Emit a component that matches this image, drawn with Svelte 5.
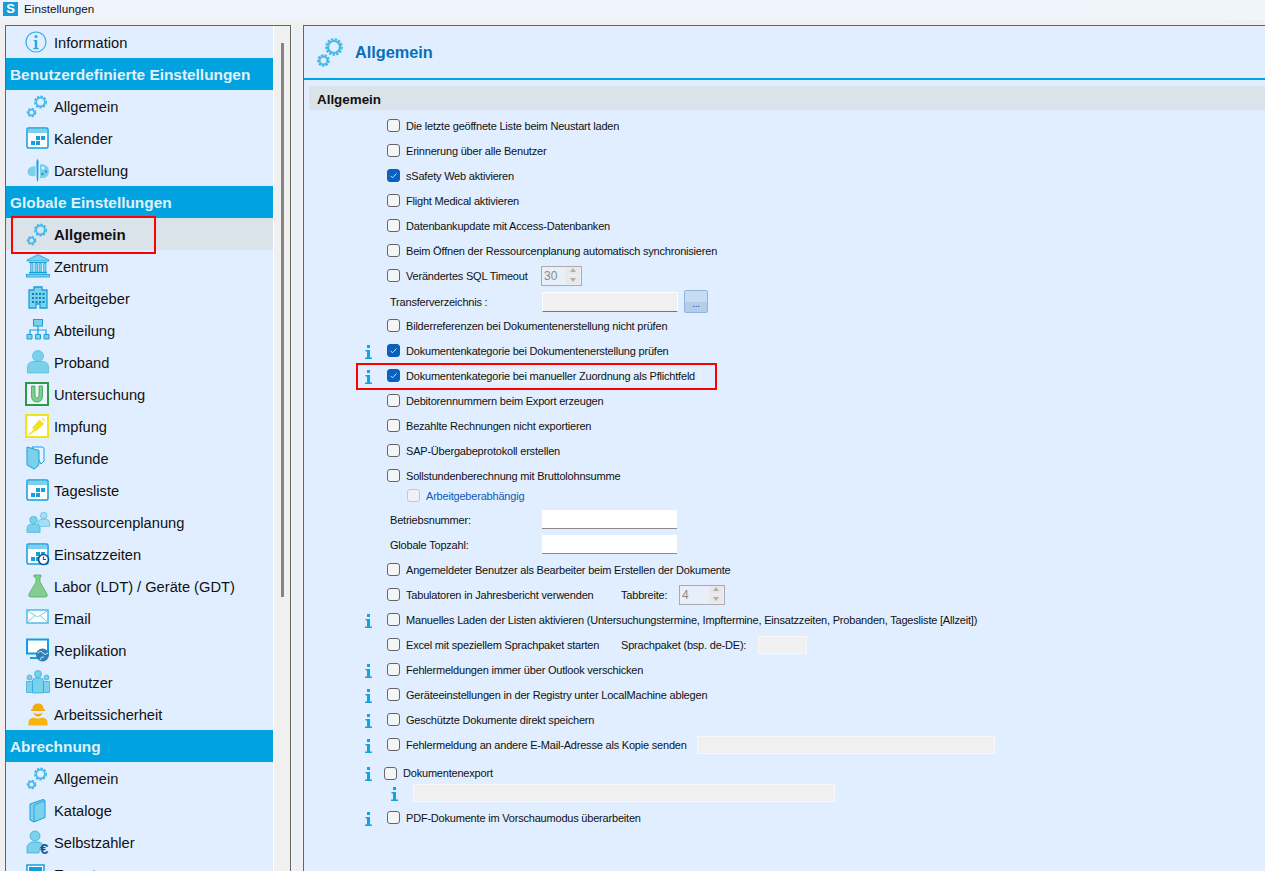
<script>
	const nav = [
		{ label: 'Information', icon: 'info' },
		{ head: 'Benutzerdefinierte Einstellungen' },
		{ label: 'Allgemein', icon: 'gears' },
		{ label: 'Kalender', icon: 'calendar' },
		{ label: 'Darstellung', icon: 'palette' },
		{ head: 'Globale Einstellungen' },
		{ label: 'Allgemein', icon: 'gears', active: true },
		{ label: 'Zentrum', icon: 'temple' },
		{ label: 'Arbeitgeber', icon: 'building' },
		{ label: 'Abteilung', icon: 'org' },
		{ label: 'Proband', icon: 'person' },
		{ label: 'Untersuchung', icon: 'exam' },
		{ label: 'Impfung', icon: 'syringe' },
		{ label: 'Befunde', icon: 'folder' },
		{ label: 'Tagesliste', icon: 'calendar' },
		{ label: 'Ressourcenplanung', icon: 'people' },
		{ label: 'Einsatzzeiten', icon: 'clock' },
		{ label: 'Labor (LDT) / Geräte (GDT)', icon: 'flask' },
		{ label: 'Email', icon: 'mail' },
		{ label: 'Replikation', icon: 'monitor' },
		{ label: 'Benutzer', icon: 'users' },
		{ label: 'Arbeitssicherheit', icon: 'worker' },
		{ head: 'Abrechnung' },
		{ label: 'Allgemein', icon: 'gears' },
		{ label: 'Kataloge', icon: 'book' },
		{ label: 'Selbstzahler', icon: 'payer' },
		{ label: 'Exporte', icon: 'export' }
	];

	const line = '#1a9fdd';
	const soft = '#7bd0ea';
</script>

{#snippet gear(cx, cy, r, w)}
	<circle {cx} {cy} r={r + w * 0.8} fill="none" stroke="#45b8e8" stroke-width={w} stroke-dasharray="2.4 1.300" />
	<circle {cx} {cy} {r} fill="none" stroke="#45b8e8" stroke-width={w} />
{/snippet}

{#snippet bust(x, y, s, fill)}
	<g transform="translate({x} {y}) scale({s})">
		<circle cx="8" cy="5" r="4.6" fill={fill} stroke={line} stroke-width="0.6" />
		<path d="M0 20v-5q0-4.500 5-5h6q5 .5 5 5v5z" fill={fill} stroke={line} stroke-width="0.6" />
	</g>
{/snippet}

{#snippet icon(name)}
	<svg class="ico" viewBox="0 0 24 24" width="24" height="24">
		{#if name === 'info'}
			<circle cx="10" cy="12" r="10" fill="none" stroke="#35b1e4" stroke-width="1.200" />
			<circle cx="10" cy="6.500" r="1.500" fill="#2aa8e0" />
			<path d="M7.800 10h3.400v8h1.500v1.200H7.300V18h1.500v-6.800h-1z" fill="#2aa8e0" />
		{:else if name === 'gears'}
			{@render gear(14.500, 8, 4.300, 1.700)}
			{@render gear(5.500, 18.500, 2.800, 1.500)}
		{:else if name === 'calendar' || name === 'clock'}
			<rect x="1" y="2" width="21" height="20" rx="1.500" fill="#fff" stroke="#109fdf" stroke-width="1.500" />
			<rect x="2" y="3" width="19" height="4" fill={soft} />
			<path d="M10 10h4v4h-4zM15 10h4v4h-4zM5 15h4v4H5zM10 15h4v4h-4z" fill="#109fdf" />
			{#if name === 'clock'}
				<circle cx="17.500" cy="17.500" r="5" fill="#fff" stroke="#0d5a94" stroke-width="1.700" />
				<path d="M17.500 14.500v3h2.500" fill="none" stroke="#0d5a94" stroke-width="1.200" />
			{/if}
		{:else if name === 'palette'}
			<path d="M9.500 8Q1 8.500 1.500 14T9.500 18z" fill={soft} />
			<path d="M14 6q9 0 9 7.500T14 20z" fill={soft} />
			<circle cx="17" cy="10" r="1.300" fill="#fff" />
			<circle cx="20" cy="13.500" r="1.300" fill="#1a9fdd" />
			<circle cx="16.500" cy="16" r="1.300" fill="#1a9fdd" />
			<path d="M11.500 0.500q1.500 2 1 6l-.2 15-.8 2.500-.8-2.500-.2-15q-.5-3 1-6z" fill="#1a9fdd" />
		{:else if name === 'temple'}
			<path d="M12 0.500 23 6v1H1V6z" fill={soft} stroke={line} stroke-width="0.800" />
			<path d="M3 8h18v1H3zM3 18h18v1.500H3z" fill={line} />
			<path d="M4.500 9.500h2.500v8.500H4.500zM9 9.500h2.500v8.500H9zM13 9.500h2.500v8.500H13zM17.500 9.500H20v8.500h-2.500z" fill={soft} stroke={line} stroke-width="0.600" />
			<rect x="0.500" y="20.500" width="23" height="2.500" fill={soft} stroke={line} stroke-width="0.800" />
		{:else if name === 'building'}
			<path d="M3 4h5V1h8v3h5v18h-7v-4h-4v4H3z" fill={soft} stroke={line} stroke-width="1.300" />
			<path d="M6 7h2v2H6zM9.500 7h2v2h-2zM13 7h2v2h-2zM16.500 7h2v2h-2zM6 11h2v2H6zM9.500 11h2v2h-2zM13 11h2v2h-2zM16.500 11h2v2h-2zM6 15h2v2H6zM9.500 15h2v2h-2zM13 15h2v2h-2zM16.500 15h2v2h-2z" fill="#0f7fc0" />
		{:else if name === 'org'}
			<rect x="7.500" y="1.500" width="9" height="6.500" fill={soft} stroke={line} stroke-width="1" />
			<path d="M12 8v4M4 16v-4h16v4M12 12v4" fill="none" stroke={line} stroke-width="1.200" />
			<path d="M1 16.500h5V21H1zM9.500 16.500h5V21h-5zM18 16.500h5V21h-5z" fill={soft} stroke={line} stroke-width="1" />
		{:else if name === 'person'}
			<circle cx="12" cy="6" r="5.500" fill={soft} stroke="#4cb8e3" stroke-width="0.700" />
			<path d="M1.500 23v-6q0-4.500 5-5.500h11q5 1 5 5.500v6z" fill={soft} stroke="#4cb8e3" stroke-width="0.700" />
		{:else if name === 'exam'}
			<rect x="0" y="1" width="22" height="22" fill="#eef5ff" stroke="#2c9a46" stroke-width="2" />
			<path d="M5.500 4h3.500v9q0 3 2 3t2-3V4h3.500v10q0 6-5.500 6T5.500 14z" fill="#7fce8e" stroke="#2c9a46" stroke-width="0.700" />
		{:else if name === 'syringe'}
			<rect x="0" y="1" width="22" height="22" fill="#fff" stroke="#f2e41a" stroke-width="2" />
			<path d="M13.500 6 17.500 10 9.500 17 6.500 14zM2.500 21 7.500 16 8.500 17zM15.500 4l4 4M16.500 6l2-2" fill="#f2e41a" stroke="#e8d810" stroke-width="0.800" />
		{:else if name === 'folder'}
			<path d="M6 1h10q2 0 2 2v12l-3 3z" fill="#e6f3fb" stroke={line} stroke-width="1" />
			<path d="M1 1l12 3.500V17q0 1-1 3l-4 3-7-4z" fill={soft} stroke={line} stroke-width="1" />
		{:else if name === 'people'}
			{@render bust(12, 2, 0.72, '#a5dff1')}
			{@render bust(1, 6, 0.82, soft)}
		{:else if name === 'flask'}
			<path d="M8 1h7v2h-1v5l7 12q1 3-2 3H5q-3 0-2-3l7-12V3H8z" fill="#84cd90" stroke="#4eae60" stroke-width="0.800" />
		{:else if name === 'mail'}
			<rect x="1" y="4" width="21" height="13" fill="#fff" stroke="#35b1e4" stroke-width="1.300" />
			<path d="M1 4.500 11.500 11 22 4.500M1 16.500 9 9.500M22 16.500l-8-7" fill="none" stroke="#6cc7ea" stroke-width="0.900" />
		{:else if name === 'monitor'}
			<rect x="1" y="1.500" width="21" height="14" fill="#fff" stroke="#109fdf" stroke-width="2" />
			<path d="M4 20h13" stroke="#109fdf" stroke-width="2" />
			<circle cx="16.500" cy="17" r="6.500" fill="#2f80b8" />
			<path d="M11.500 15q4-3 5.500 0t5 0M14 22q1-4 4-3" fill="none" stroke="#d7ecf8" stroke-width="1" />
		{:else if name === 'users'}
			<circle cx="3.500" cy="7.500" r="2.500" fill={soft} stroke={line} stroke-width="0.600" />
			<path d="M0.500 11.500h6v11h-6z" fill={soft} stroke={line} stroke-width="0.600" />
			<circle cx="20.500" cy="7.500" r="2.500" fill={soft} stroke={line} stroke-width="0.600" />
			<path d="M17.500 11.500h6v11h-6z" fill={soft} stroke={line} stroke-width="0.600" />
			<circle cx="12" cy="4" r="3.500" fill={soft} stroke={line} stroke-width="0.600" />
			<path d="M6.500 11q0-3 3-3h5q3 0 3 3v12h-11z" fill={soft} stroke={line} stroke-width="0.600" />
		{:else if name === 'worker'}
			<path d="M6.500 7q0-5.500 5.500-5.500T17.500 7l1.500.5v1.500H5v-1.500z" fill="#f3aa10" />
			<path d="M7.500 10q1 4.500 4.500 4.500t4.500-4.500q-1 2-4.500 2t-4.500-2z" fill="#f3aa10" />
			<path d="M2.500 23.500V20q0-3.500 5-4.500 4.500 2 9 0 5 1 5 4.500v3.500z" fill="#f6b40e" />
		{:else if name === 'book'}
			<path d="M4 6 17 1.500l2 1v17L8 24l-4-2z" fill={soft} stroke={line} stroke-width="1" />
			<path d="M8 7V24M8 7 19 2.500" fill="none" stroke={line} stroke-width="0.800" />
		{:else if name === 'payer'}
			<circle cx="9" cy="6" r="5" fill={soft} stroke={line} stroke-width="0.600" />
			<path d="M1 23v-5q0-4.500 5-6h7q4 1 4 4-4 1-4 7z" fill={soft} stroke={line} stroke-width="0.600" />
			<text x="14" y="23.500" class="euro">€</text>
		{:else if name === 'export'}
			<rect x="1" y="3" width="17" height="22" fill="#fff" stroke="#109fdf" stroke-width="1.500" />
			<rect x="3" y="5" width="13" height="4" fill="#109fdf" />
		{/if}
	</svg>
{/snippet}

{#snippet tip()}
	<svg class="tip" viewBox="0 0 7 14" width="7" height="14">
		<rect x="2" y="0" width="3" height="3" fill="#12a3e2" />
		<path d="M0.500 5H5v7.500h2V14H0v-1.500h2V6.500H0.500z" fill="#12a3e2" />
	</svg>
{/snippet}

{#snippet box(on, off)}
	<span class="box" class:on class:off>
		{#if on}
			<svg viewBox="0 0 13 13" width="13" height="13"><path d="M3.500 6.800 5.500 8.800 9.500 4.500" fill="none" stroke="#cfe2f6" stroke-width="1" /></svg>
		{/if}
	</span>
{/snippet}

{#snippet spin(value)}
	<span class="spin">
		<span class="spin-val">{value}</span>
		<span class="spin-btns">
			<span class="up"></span>
			<span class="down"></span>
		</span>
	</span>
{/snippet}

{#snippet check(text, on = false, info = false)}
	<div class="row">
		<span class="slot">{#if info}{@render tip()}{/if}</span>
		{@render box(on)}
		<span class="lbl">{text}</span>
	</div>
{/snippet}

<div class="win">
	<header class="titlebar">
		<span class="logo">S</span>
		<span class="title">Einstellungen</span>
	</header>

	<div class="body">
		<aside class="side">
			<nav class="list">
				{#each nav as item}
					{#if item.head}
						<div class="head">{item.head}</div>
					{:else}
						<div class="item" class:active={item.active}>
							{@render icon(item.icon)}
							<span class="name">{item.label}</span>
							{#if item.active}<span class="mark"></span>{/if}
						</div>
					{/if}
				{/each}
			</nav>
			<div class="track"><div class="thumb"></div></div>
		</aside>

		<div class="split"><div class="grip"></div></div>

		<main class="main">
			<div class="top">
				<svg viewBox="0 0 30 30" width="30" height="30">
					{@render gear(18, 10, 6, 2.200)}
					{@render gear(7.500, 23.500, 3.900, 1.900)}
				</svg>
				<h1>Allgemein</h1>
			</div>

			<div class="section">Allgemein</div>

			<div class="form">
				{@render check('Die letzte geöffnete Liste beim Neustart laden')}
				{@render check('Erinnerung über alle Benutzer')}
				{@render check('sSafety Web aktivieren', true)}
				{@render check('Flight Medical aktivieren')}
				{@render check('Datenbankupdate mit Access-Datenbanken')}
				{@render check('Beim Öffnen der Ressourcenplanung automatisch synchronisieren')}
				<div class="row">
					<span class="slot"></span>
					{@render box(false)}
					<span class="lbl w-sql">Verändertes SQL Timeout</span>
					{@render spin('30')}
				</div>
				<div class="row field transfer">
					<span class="cap">Transferverzeichnis :</span>
					<span class="input grey"></span>
					<span class="dots">...</span>
				</div>
				{@render check('Bilderreferenzen bei Dokumentenerstellung nicht prüfen')}
				{@render check('Dokumentenkategorie bei Dokumentenerstellung prüfen', true, true)}
				<div class="row marked">
					<span class="slot">{@render tip()}</span>
					{@render box(true)}
					<span class="lbl">Dokumentenkategorie bei manueller Zuordnung als Pflichtfeld</span>
					<span class="mark"></span>
				</div>
				{@render check('Debitorennummern beim Export erzeugen')}
				{@render check('Bezahlte Rechnungen nicht exportieren')}
				{@render check('SAP-Übergabeprotokoll erstellen')}
				{@render check('Sollstundenberechnung mit Bruttolohnsumme')}
				<div class="row sub">
					{@render box(false, true)}
					<span class="lbl link">Arbeitgeberabhängig</span>
				</div>
				<div class="row field after-sub">
					<span class="cap">Betriebsnummer:</span>
					<span class="input"></span>
				</div>
				<div class="row field">
					<span class="cap">Globale Topzahl:</span>
					<span class="input"></span>
				</div>
				{@render check('Angemeldeter Benutzer als Bearbeiter beim Erstellen der Dokumente')}
				<div class="row">
					<span class="slot"></span>
					{@render box(false)}
					<span class="lbl w-tab">Tabulatoren in Jahresbericht verwenden</span>
					<span class="w-tabbreite">Tabbreite:</span>
					{@render spin('4')}
				</div>
				{@render check('Manuelles Laden der Listen aktivieren (Untersuchungstermine, Impftermine, Einsatzzeiten, Probanden, Tagesliste [Allzeit])', false, true)}
				<div class="row">
					<span class="slot"></span>
					{@render box(false)}
					<span class="lbl w-tab">Excel mit speziellem Sprachpaket starten</span>
					<span class="w-lang">Sprachpaket (bsp. de-DE):</span>
					<span class="input flat lang"></span>
				</div>
				{@render check('Fehlermeldungen immer über Outlook verschicken', false, true)}
				{@render check('Geräteeinstellungen in der Registry unter LocalMachine ablegen', false, true)}
				{@render check('Geschützte Dokumente direkt speichern', false, true)}
				<div class="row">
					<span class="slot">{@render tip()}</span>
					{@render box(false)}
					<span class="lbl w-mail">Fehlermeldung an andere E-Mail-Adresse als Kopie senden</span>
					<span class="input flat mail"></span>
				</div>
				<div class="row export">
					<span class="slot">{@render tip()}</span>
					{@render box(false)}
					<span class="lbl">Dokumentenexport</span>
				</div>
				<div class="row export-path">
					<span class="slot">{@render tip()}</span>
					<span class="input flat path"></span>
				</div>
				<div class="row last">
					<span class="slot">{@render tip()}</span>
					{@render box(false)}
					<span class="lbl">PDF-Dokumente im Vorschaumodus überarbeiten</span>
				</div>
			</div>
		</main>
	</div>
</div>

<style>
	:global(body) {
		margin: 0;
		background: #f0f0f0;
	}

	.win {
		height: 871px;
		overflow: hidden;
		font-family: 'Liberation Sans', Arial, sans-serif;
		color: #111;
		background: #f0f0f0;
	}

	.titlebar {
		height: 20px;
		display: flex;
		align-items: center;
		gap: 6px;
		padding-left: 3px;
		font-size: 11.7px;
		background: linear-gradient(90deg, #eff3fd, #eff3fc 80%, #eff5f8);
	}

	.title {
		margin-top: -3px;
	}

	.logo {
		width: 15px;
		height: 14px;
		margin-top: -3px;
		background: #1a9bd8;
		color: #fff;
		font-size: 13px;
		font-weight: 700;
		line-height: 14px;
		text-align: center;
		box-sizing: border-box;
	}

	.body {
		display: flex;
		padding: 5px 0 0 5px;
		height: 851px;
		box-sizing: border-box;
	}

	.side {
		width: 286px;
		flex: none;
		display: flex;
		box-sizing: border-box;
		border: 1px solid #666;
		border-width: 1px 1px 0;
	}

	.list {
		width: 268px;
		flex: none;
		box-sizing: border-box;
		border-right: 1px solid #fff;
		background: #e0eeff;
		overflow: hidden;
	}

	.item,
	.head {
		height: 32px;
		display: flex;
		align-items: center;
		white-space: nowrap;
		box-sizing: border-box;
	}

	.item {
		position: relative;
		gap: 4px;
		padding-left: 20px;
		font-size: 14.67px;
	}

	.name {
		margin-top: 2px;
	}

	.head {
		padding: 2px 0 0 4px;
		background: #00a2df;
		color: #e2f1fb;
		font-size: 15.4px;
		font-weight: 700;
	}

	.item.active {
		background: #dae2ea;
		font-weight: 700;
		font-size: 15px;
	}

	.active .name {
		margin-top: 0;
	}

	.item .mark {
		position: absolute;
		left: 5px;
		top: -2px;
		width: 141px;
		height: 34px;
		border: 2px solid #f00;
	}

	.ico {
		flex: none;
		overflow: visible;
	}

	.euro {
		font-size: 15px;
		font-weight: 700;
		fill: #0d5a94;
	}

	.track {
		flex: 1;
		padding-top: 17px;
	}

	.thumb {
		width: 3px;
		height: 554px;
		margin-left: 7px;
		background: #858585;
	}

	.split {
		width: 12px;
		flex: none;
	}

	.grip {
		width: 4px;
		height: 100%;
		margin-left: 4px;
		background: #e5f0fb;
	}

	.main {
		flex: 1;
		min-width: 0;
		box-sizing: border-box;
		border: 1px solid #666;
		border-width: 1px 0 0 1px;
		background: #e0eeff;
	}

	.top {
		height: 52px;
		display: flex;
		align-items: center;
		gap: 9px;
		padding-left: 12px;
		border-bottom: 2px solid #00a2df;
	}

	h1 {
		margin: 0;
		font-size: 16.3px;
		font-weight: 700;
		color: #0a6fb7;
	}

	.section {
		height: 24px;
		line-height: 28px;
		margin: 6px 0 3px 5px;
		padding-left: 8px;
		background: #dae2ea;
		font-size: 13.4px;
		font-weight: 700;
	}

	.form {
		font-size: 11px;
		letter-spacing: -0.2px;
	}

	.row {
		height: 25px;
		display: flex;
		align-items: center;
		padding-left: 61px;
		white-space: nowrap;
		position: relative;
		box-sizing: border-box;
	}

	.slot {
		width: 22px;
		flex: none;
		display: flex;
	}

	.tip {
		margin-top: 2px;
	}

	.box {
		width: 13px;
		height: 13px;
		flex: none;
		box-sizing: border-box;
		border: 1px solid #666;
		border-radius: 3px;
		background: #f4f5f7;
		position: relative;
	}

	.box svg {
		position: absolute;
		left: -1px;
		top: -1px;
	}

	.box.on {
		background: #0a61bd;
		border-color: #0a61bd;
	}

	.box.off {
		background: #eef2f8;
		border-color: #c4c8cc;
	}

	.lbl {
		margin-left: 6px;
	}

	.w-sql {
		width: 135px;
		flex: none;
	}

	.w-tab {
		width: 215px;
		flex: none;
	}

	.w-tabbreite {
		width: 58px;
		flex: none;
	}

	.w-lang {
		width: 137px;
		flex: none;
	}

	.w-mail {
		width: 291px;
		flex: none;
	}

	.spin {
		width: 41px;
		height: 20px;
		box-sizing: border-box;
		border: 1px solid #aaa;
		background: #e8eff8;
		display: flex;
		align-items: center;
		justify-content: space-between;
		padding: 0 1px 0 2px;
		color: #8a8a8a;
		font-size: 12px;
		letter-spacing: 0;
	}

	.w-tabbreite + .spin {
		width: 46px;
	}

	.spin-btns {
		width: 14px;
		display: flex;
		flex-direction: column;
		gap: 1px;
		background: #f0f0f0;
	}

	.spin-btns span {
		height: 8px;
		position: relative;
		background: #e8e8e8;
	}

	.up::after,
	.down::after {
		content: '';
		position: absolute;
		left: 4px;
		width: 0;
		height: 0;
		border: 3px solid transparent;
	}

	.up::after {
		top: 1px;
		border-top: 0;
		border-bottom: 4px solid #b0b0b0;
	}

	.down::after {
		top: 2px;
		border-bottom: 0;
		border-top: 4px solid #b0b0b0;
	}

	.field {
		padding-left: 86px;
	}

	.transfer {
		padding-top: 2px;
	}

	.cap {
		width: 152px;
		flex: none;
	}

	.input {
		width: 135px;
		height: 19px;
		box-sizing: border-box;
		background: #fff;
		border-bottom: 1px solid #8a8a8a;
	}

	.input.grey {
		width: 136px;
		height: 20px;
		background: #f0f0f0;
		border: 1px solid #fff;
		border-bottom: 1px solid #777;
	}

	.input.flat {
		height: 18px;
		background: #f0f0f0;
		border: 1px solid #f8f8f8;
	}

	.dots {
		width: 24px;
		height: 23px;
		margin-left: 6px;
		box-sizing: border-box;
		border: 1px solid #8fb4dc;
		border-radius: 2px;
		background: linear-gradient(#c5dcf4 50%, #b4cee9 50%);
		color: #1b3fa0;
		font-size: 10px;
		line-height: 26px;
		text-align: center;
	}

	.input.lang {
		width: 49px;
	}

	.input.mail {
		width: 298px;
	}

	.marked .lbl {
		background: #e6f1fd;
		padding: 2px 7px 2px 0;
	}

	.marked .mark {
		position: absolute;
		left: 52px;
		top: 0;
		width: 357px;
		height: 23px;
		border: 2px solid #f00;
	}

	.sub {
		height: 15px;
		padding-left: 103px;
	}

	.link {
		color: #1358b4;
	}

	.after-sub {
		margin-top: 4px;
	}

	.export {
		margin-top: 4px;
		height: 22px;
		padding-top: 2px;
	}

	.export .slot {
		width: 19px;
	}

	.export-path {
		height: 20px;
		padding-left: 87px;
	}

	.input.path {
		width: 422px;
	}

	.last {
		margin-top: 2px;
	}
</style>
